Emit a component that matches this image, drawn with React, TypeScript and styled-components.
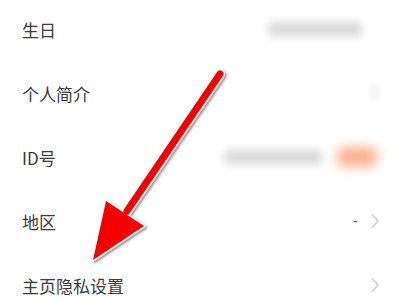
import React from 'react'
import styled, { createGlobalStyle } from 'styled-components'

const GlobalStyle = createGlobalStyle`
  html, body {
    margin: 0;
    padding: 0;
    background: #fff;
  }
  body {
    font-family: "Noto Sans CJK SC", "Noto Sans", sans-serif;
  }
`

type Row = {
  label: string
  value?: React.ReactNode
  arrow?: boolean
  faint?: boolean
}

export default function App() {
  const rows: Row[] = [
    { label: '生日', value: <BlurBar width={94} $right={18} /> },
    { label: '个人简介', faint: true },
    {
      label: 'ID号',
      value: (
        <>
          <BlurBar width={98} />
          <OrangeBlob />
        </>
      ),
    },
    { label: '地区', value: <Dash>-</Dash>, arrow: true },
    { label: '主页隐私设置', arrow: true },
  ]

  return (
    <Page>
      <GlobalStyle />
      <List>
        {rows.map((r) => (
          <Item key={r.label}>
            <Label>{r.label}</Label>
            <Right>
              {r.value}
              {r.arrow && <Chevron />}
              {r.faint && <FaintMark />}
            </Right>
          </Item>
        ))}
      </List>
      <PointerArrow />
    </Page>
  )
}

function Chevron() {
  return (
    <ChevronSvg viewBox="0 0 10 16" width="10" height="16">
      <path d="M2 1.5 L8 8 L2 14.5" fill="none" stroke="#c9c9c9" strokeWidth="1.3" />
    </ChevronSvg>
  )
}

function PointerArrow() {
  return (
    <ArrowSvg width="400" height="301" viewBox="0 0 400 301">
      <defs>
        <filter id="sh" x="-20%" y="-20%" width="140%" height="140%">
          <feDropShadow dx="1.5" dy="1.5" stdDeviation="1.2" floodColor="#000" floodOpacity="0.45" />
        </filter>
      </defs>
      <g filter="url(#sh)">
        <line x1="220" y1="74" x2="127" y2="211" stroke="#fff" strokeWidth="10" strokeLinecap="round" />
        <polygon points="93,260 106,201 144,226" fill="#fff" stroke="#fff" strokeWidth="3" strokeLinejoin="round" />
        <line x1="220" y1="74" x2="127" y2="211" stroke="#f30000" strokeWidth="7" strokeLinecap="round" />
        <polygon points="93,260 106,201 144,226" fill="#f30000" />
      </g>
    </ArrowSvg>
  )
}

const Page = styled.div`
  position: relative;
  width: 400px;
  height: 301px;
  overflow: hidden;
  background: #fff;
`

const List = styled.div`
  display: flex;
  flex-direction: column;
  margin-top: -3px;
`

const Item = styled.div`
  display: flex;
  align-items: center;
  justify-content: space-between;
  height: 64px;
  padding: 0 20px 0 22px;
`

const Label = styled.span`
  font-size: 17px;
  color: #3a3a3a;
`

const Right = styled.div`
  display: flex;
  align-items: center;
  gap: 14px;
`

const BlurBar = styled.div<{ width: number; $right?: number }>`
  width: ${(p) => p.width}px;
  height: 14px;
  margin-right: ${(p) => p.$right ?? 0}px;
  border-radius: 4px;
  background: #d9d9d9;
  filter: blur(4px);
`

const OrangeBlob = styled.div`
  width: 42px;
  height: 20px;
  margin-right: 2px;
  border-radius: 10px;
  background: #fcae8c;
  filter: blur(6px);
`

const Dash = styled.span`
  font-size: 14px;
  color: #555;
  font-family: "Liberation Sans", sans-serif;
  margin-right: -2px;
`

const FaintMark = styled.div`
  width: 10px;
  height: 18px;
  background: #f6f6f6;
  filter: blur(2px);
`

const ChevronSvg = styled.svg`
  display: block;
`

const ArrowSvg = styled.svg`
  position: absolute;
  left: 0;
  top: 0;
  pointer-events: none;
`
